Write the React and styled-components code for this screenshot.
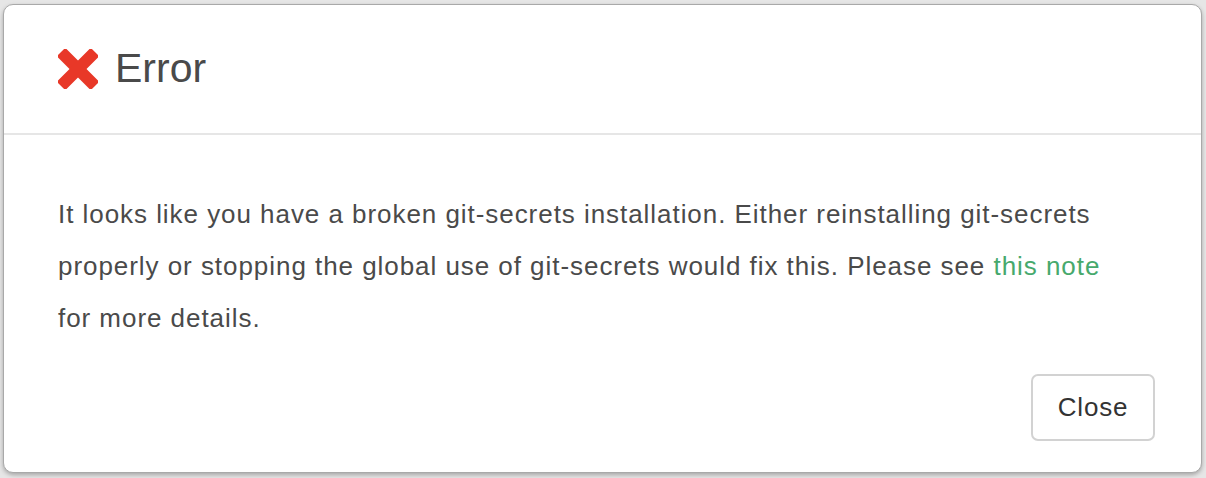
import React from "react";
import styled, { createGlobalStyle } from "styled-components";

const Global = createGlobalStyle`
  html, body { margin: 0; padding: 0; }
  body {
    background: #e6e6e6;
    font-family: "Liberation Sans", Arial, Helvetica, sans-serif;
    width: 1206px;
    height: 478px;
    overflow: hidden;
  }
`;

const Dialog = styled.div`
  box-sizing: border-box;
  margin: 4px 0 0 3px;
  width: 1199px;
  height: 469px;
  background: #fff;
  border: 1px solid #a9a9a9;
  border-radius: 10px;
  box-shadow: 0 2px 4px rgba(0, 0, 0, 0.28);
  display: flex;
  flex-direction: column;
  overflow: hidden;
`;

const Header = styled.div`
  height: 128px;
  display: flex;
  align-items: center;
  gap: 17px;
  padding: 0 54px;
  border-bottom: 2px solid #e6e6e6;
  flex-shrink: 0;
`;

const Title = styled.h1`
  margin: 0;
  font-size: 41px;
  font-weight: 400;
  color: #4a4a4a;
  line-height: 1;
  padding-bottom: 2px;
`;

const Body = styled.div`
  padding: 53px 80px 0 54px;
  font-size: 26px;
  line-height: 52px;
  letter-spacing: 0.95px;
  color: #4a4a4a;
`;

const Link = styled.a`
  color: #47a96d;
  text-decoration: none;
`;

const Footer = styled.div`
  display: flex;
  justify-content: flex-end;
  padding: 30px 46px 0;
`;

const Button = styled.button`
  box-sizing: border-box;
  height: 67px;
  width: 124px;
  background: #fff;
  border: 2px solid #d2d2d2;
  border-radius: 7px;
  font-family: "Liberation Sans", Arial, sans-serif;
  font-size: 26px;
  letter-spacing: 0.8px;
  color: #333;
  cursor: pointer;
`;

const ErrorIcon = () => (
  <svg width="40" height="40" viewBox="0 0 40 40">
    <g fill="#e83828">
      <rect x="-4" y="14" width="48" height="12" rx="1.5" transform="rotate(45 20 20)" />
      <rect x="-4" y="14" width="48" height="12" rx="1.5" transform="rotate(-45 20 20)" />
    </g>
  </svg>
);

export default function App() {
  return (
    <>
      <Global />
      <Dialog>
        <Header>
          <ErrorIcon />
          <Title>Error</Title>
        </Header>
        <Body>
          It looks like you have a broken git-secrets installation. Either reinstalling git-secrets
          properly or stopping the global use of git-secrets would fix this. Please see{" "}
          <Link href="#">this note</Link> for more details.
        </Body>
        <Footer>
          <Button>Close</Button>
        </Footer>
      </Dialog>
    </>
  );
}
